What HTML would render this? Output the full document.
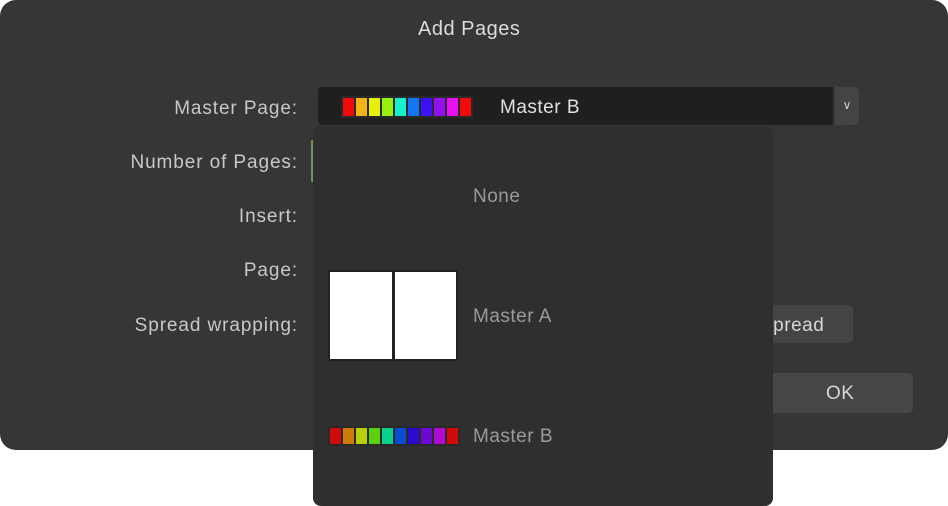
<!DOCTYPE html>
<html><head><style>
body{margin:0;width:948px;height:506px;background:#fff;position:relative;overflow:hidden;font-family:"Liberation Sans",sans-serif}
.dlg{position:absolute;left:0;top:0;width:948px;height:450px;background:#363636;border-radius:16px}
.t{position:absolute;color:#d6d6d6;font-size:19px;letter-spacing:0.5px}
.lbl{position:absolute;right:650px;color:#c8c8c8;font-size:19px;letter-spacing:0.9px;text-align:right;white-space:nowrap}
.sw{position:absolute;display:flex;gap:2px;padding:2px;background:#2a2a2a}
.sw i{display:block;width:11px;height:100%}
</style></head><body>
<div class="dlg">
<div class="t" style="left:418px;top:18px;font-size:20px;color:#dcdcdc">Add Pages</div>
<div class="lbl" style="top:98px">Master Page:</div>
<div class="lbl" style="top:152px">Number of Pages:</div>
<div class="lbl" style="top:206px">Insert:</div>
<div class="lbl" style="top:260px">Page:</div>
<div class="lbl" style="top:315px">Spread wrapping:</div>
<div style="position:absolute;left:318px;top:87px;width:515px;height:38px;background:#1f1f1f;border-radius:4px 0 0 4px"></div>
<div style="position:absolute;left:835px;top:87px;width:24px;height:38px;background:#444;border-radius:0 5px 5px 0;color:#ccc;font-size:12px;text-align:center;line-height:36px">&#8744;</div>
<div class="sw" style="left:341px;top:96px;height:18px">
<i style="background:#f20a0a"></i><i style="background:#f5b416"></i><i style="background:#e6f00c"></i><i style="background:#98f00e"></i><i style="background:#16f0cc"></i><i style="background:#1276f0"></i><i style="background:#3e10f2"></i><i style="background:#9210f0"></i><i style="background:#e610f0"></i><i style="background:#f20a0a"></i></div>
<div class="t" style="left:500px;top:97px;color:#e0e0e0">Master B</div>
<div style="position:absolute;left:311px;top:140px;width:3px;height:42px;background:#6a9a5a;border-radius:2px"></div>
<div style="position:absolute;left:740px;top:305px;width:113px;height:38px;background:#444;border-radius:4px"></div>
<div class="t" style="left:760px;top:315px">Spread</div>
<div style="position:absolute;left:760px;top:373px;width:153px;height:40px;background:#464646;border-radius:5px"></div>
<div class="t" style="left:826px;top:383px">OK</div>
</div>
<div style="position:absolute;left:313px;top:126px;width:460px;height:380px;background:#2f2f2f;border-radius:8px">
<div class="t" style="left:160px;top:60px;color:#9a9a9a">None</div>
<div style="position:absolute;left:15px;top:144px;width:130px;height:91px;background:#222;"></div>
<div style="position:absolute;left:17px;top:146px;width:62px;height:87px;background:#fff"></div>
<div style="position:absolute;left:82px;top:146px;width:61px;height:87px;background:#fff"></div>
<div class="t" style="left:160px;top:180px;color:#9a9a9a">Master A</div>
<div class="sw" style="left:15px;top:300px;height:16px">
<i style="background:#d00a0a"></i><i style="background:#d07a0a"></i><i style="background:#b8d00a"></i><i style="background:#5cd00a"></i><i style="background:#0ad08e"></i><i style="background:#0a4ed0"></i><i style="background:#2c0ad0"></i><i style="background:#6a0ad0"></i><i style="background:#b00ad0"></i><i style="background:#d00a0a"></i></div>
<div class="t" style="left:160px;top:300px;color:#9a9a9a">Master B</div>
</div>
</body></html>
